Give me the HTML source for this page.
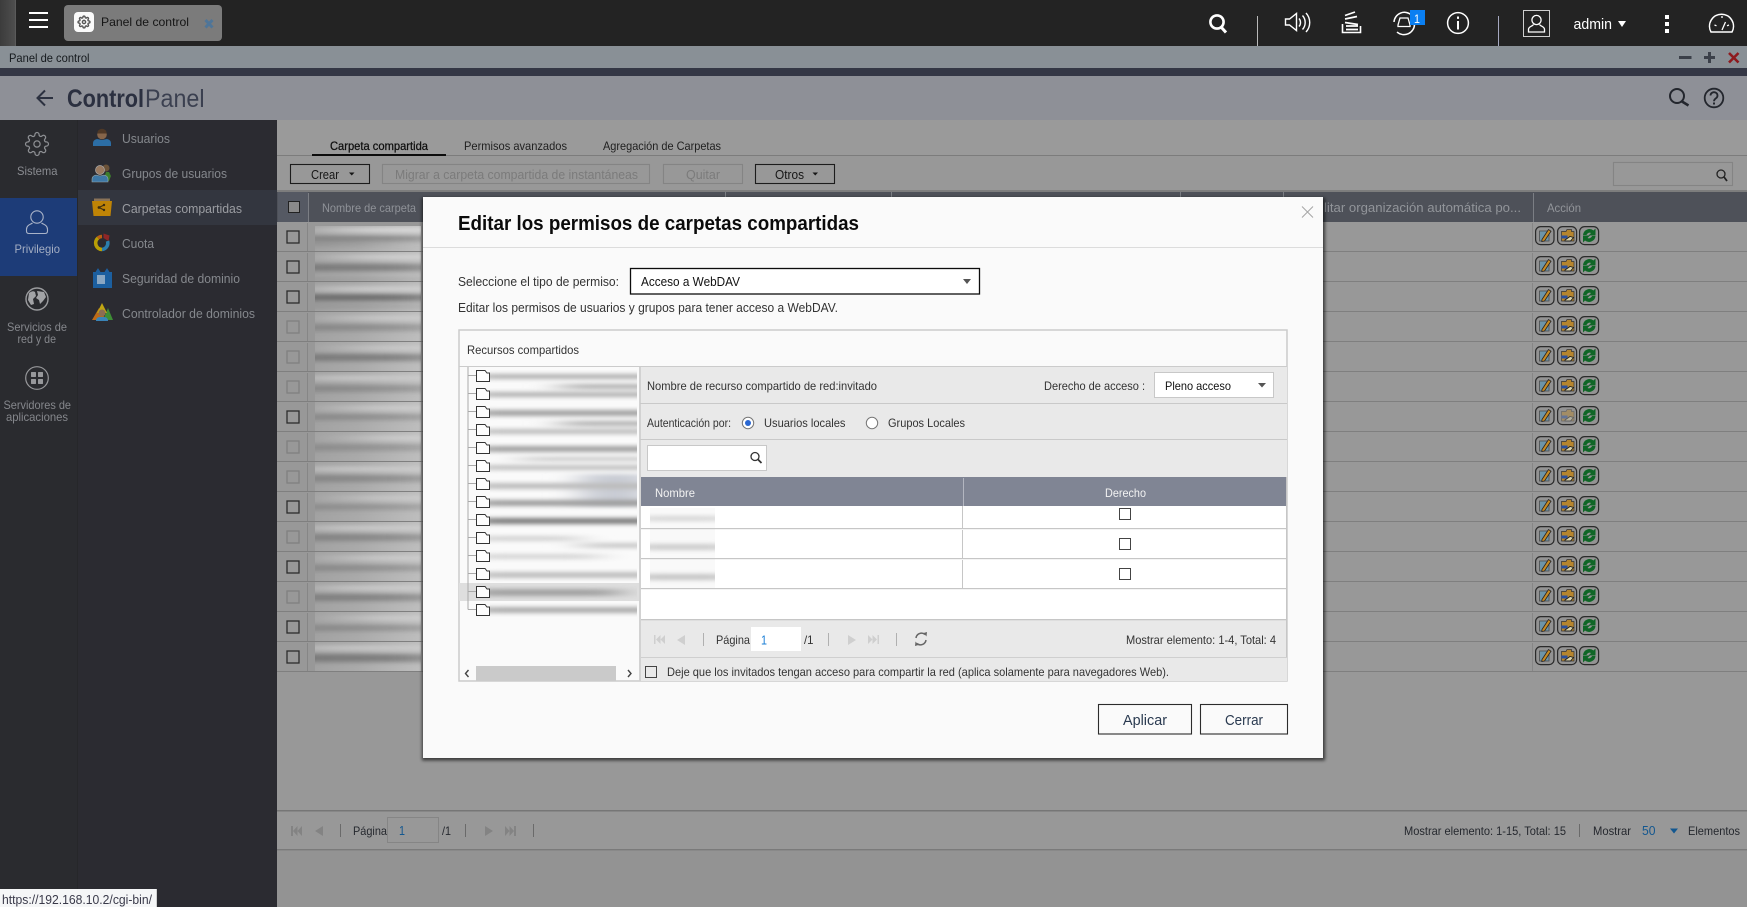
<!DOCTYPE html>
<html lang="es"><head><meta charset="utf-8"><title>Panel de control</title>
<style>
html,body{margin:0;padding:0;background:#999;width:1747px;height:907px;overflow:hidden}
svg{display:block;font-family:"Liberation Sans",Arial,sans-serif}
text{white-space:pre}
</style></head><body>
<svg xmlns="http://www.w3.org/2000/svg" width="1747" height="907" viewBox="0 0 1747 907">
<defs>
<filter id="blurH" filterUnits="userSpaceOnUse" x="200" y="180" width="1200" height="700"><feGaussianBlur stdDeviation="30 2.4"/></filter>
<filter id="blurS" filterUnits="userSpaceOnUse" x="400" y="180" width="1000" height="700"><feGaussianBlur stdDeviation="16 2"/></filter>
<filter id="sh" filterUnits="userSpaceOnUse" x="400" y="180" width="1000" height="620"><feGaussianBlur stdDeviation="1.6"/></filter>
<clipPath id="c1"><rect x="315" y="226" width="106" height="446"/></clipPath>
<clipPath id="c2"><rect x="490" y="368" width="147" height="250"/></clipPath>
<clipPath id="c3"><rect x="650" y="508" width="65" height="80"/></clipPath>
<linearGradient id="colg" x1="0" x2="1" y1="0" y2="0"><stop offset="0" stop-color="#a2a2a2"/><stop offset=".4" stop-color="#aaa"/><stop offset="1" stop-color="#bebebe"/></linearGradient>
<linearGradient id="sl" x1="0" x2="1" y1="0" y2="0"><stop offset="0" stop-color="#3c3c3c"/><stop offset="1" stop-color="#4e4e4e"/></linearGradient>
<symbol id="gear" viewBox="0 0 24 24" overflow="visible"><circle cx="12" cy="12" r="3"/><path d="M19.4 15a1.65 1.65 0 0 0 .33 1.82l.06.06a2 2 0 0 1 0 2.83 2 2 0 0 1-2.83 0l-.06-.06a1.65 1.65 0 0 0-1.82-.33 1.65 1.65 0 0 0-1 1.51V21a2 2 0 0 1-2 2 2 2 0 0 1-2-2v-.09A1.65 1.65 0 0 0 9 19.4a1.65 1.65 0 0 0-1.82.33l-.06.06a2 2 0 0 1-2.83 0 2 2 0 0 1 0-2.83l.06-.06a1.65 1.65 0 0 0 .33-1.82 1.65 1.65 0 0 0-1.51-1H3a2 2 0 0 1-2-2 2 2 0 0 1 2-2h.09A1.65 1.65 0 0 0 4.6 9a1.65 1.65 0 0 0-.33-1.82l-.06-.06a2 2 0 0 1 0-2.83 2 2 0 0 1 2.83 0l.06.06a1.65 1.65 0 0 0 1.82.33H9a1.65 1.65 0 0 0 1-1.51V3a2 2 0 0 1 2-2 2 2 0 0 1 2 2v.09a1.65 1.65 0 0 0 1 1.51 1.65 1.65 0 0 0 1.82-.33l.06-.06a2 2 0 0 1 2.83 0 2 2 0 0 1 0 2.83l-.06.06a1.65 1.65 0 0 0-.33 1.82V9a1.65 1.65 0 0 0 1.51 1H21a2 2 0 0 1 2 2 2 2 0 0 1-2 2h-.09a1.65 1.65 0 0 0-1.51 1z"/></symbol>
<g id="acts">
 <rect x=".6" y=".6" width="18.4" height="18" rx="5" fill="#939393" stroke="#2a2a2a" stroke-width="1.200"/>
 <rect x="4.500" y="5" width="9.500" height="10" fill="#6d95a8" stroke="#4c4c4c" stroke-width=".8"/>
 <path d="M7 13.500 L13.500 3.500 L16 5.200 L9.500 15 L6.800 15.500 z" fill="#c68a22" stroke="#222" stroke-width=".8"/>
 <rect x="22.600" y=".6" width="19" height="18" rx="5" fill="#939393" stroke="#2a2a2a" stroke-width="1.200"/>
 <path d="M26.500 5.500 h4.500 l1-2 h4.500 v2 h2.500 v9.500 h-12.500 z" fill="#b6852e" stroke="#333" stroke-width=".7"/>
 <rect x="26.500" y="9.500" width="6" height="3" fill="#2c4f9a"/>
 <path d="M30 14 l5-3.500 l3.500 1 l-3 3.500 h-5.500z" fill="#d9d2ab" stroke="#1c1c1c" stroke-width=".9"/>
 <rect x="44.600" y=".6" width="19" height="18" rx="5" fill="#939393" stroke="#2a2a2a" stroke-width="1.200"/>
 <path d="M48 9 a6.500 6.500 0 0 1 10.500-4.500 l2-2 v7 h-7 l2.500-2.500 a3.200 3.200 0 0 0-4.500 2z" fill="#0f6626"/>
 <path d="M60.500 10 a6.500 6.500 0 0 1-10.500 4.500 l-2 2 v-7 h7 l-2.500 2.500 a3.200 3.200 0 0 0 4.500-2z" fill="#0f6626"/>
</g>
<path id="fld" d="M.5 11.500 V.5 H9 l2 2.500 H13.500 V11.500 z" fill="#fdfdfd" stroke="#333" stroke-width="1"/>
<rect id="cd" width="12" height="12" fill="none" stroke="#2c2c2c" stroke-width="1.300"/>
<rect id="cl" width="12" height="12" fill="none" stroke="#808080" stroke-width="1.300"/>
</defs>

<!-- base content -->
<rect width="1747" height="907" fill="#989898"/>

<!-- top bar -->
<rect width="1747" height="46" fill="#232323"/>
<rect width="15" height="46" fill="url(#sl)"/><rect x="15" width="1" height="46" fill="#5a5a5a"/>
<g fill="#fff"><rect x="29" y="12" width="19" height="2"/><rect x="29" y="19" width="19" height="2"/><rect x="29" y="26" width="19" height="2"/></g>
<rect x="64" y="5" width="158" height="36" rx="4" fill="#7b7b7b"/>
<rect x="74" y="12" width="20" height="20" rx="4" fill="#fafafa"/>
<use href="#gear" x="77.500" y="15.500" width="13" height="13" fill="none" stroke="#555" stroke-width="2.600"/>
<text x="101" y="26" font-size="12" textLength="88" lengthAdjust="spacingAndGlyphs" fill="#151515">Panel de control</text>
<path d="M205.500 20 L212.500 27.500 M212.500 20 L205.500 27.500" stroke="#4f7598" stroke-width="3"/>

<!-- top-right icons -->
<g fill="none" stroke="#fff">
 <circle cx="1217" cy="22" r="6.600" stroke-width="2.600"/><path d="M1221.500 27.500 L1226 32.500" stroke-width="3"/>
 <path d="M1285.500 19 h4 l7-5.500 v17 l-7-5.500 h-4 z" stroke-width="1.400"/>
 <path d="M1299 18.500 a6 6 0 0 1 0 8 M1302.500 15.500 a10.500 10.500 0 0 1 0 14 M1306 13 a14 14 0 0 1 0 19" stroke-width="1.400"/>
 <path d="M1342.500 24 v8.500 h18 v-6.500" stroke-width="1.600"/>
 <path d="M1346 29.500 h12 M1346 26 h12 M1345 22.500 l13 2 M1345 19 l12-2.500 M1345 15.500 l10-3.500" stroke-width="1.700"/>
 <path d="M1394 22 a10.500 10.500 0 0 1 17.500-7 M1414.500 24 a10.500 10.500 0 0 1-17.500 8" stroke-width="1.500"/>
 <path d="M1398 26.500 h12 v-1.500 l-2-7 h-8 l-2 7 z" stroke-width="1.300"/>
 <circle cx="1458" cy="23" r="10.400" stroke-width="1.500"/>
 <rect x="1523.500" y="10.500" width="26" height="26" stroke="#cfcfcf" stroke-width="1"/>
 <circle cx="1536.500" cy="20" r="4.600" stroke-width="1.300"/>
 <path d="M1533.500 24.500 c-1 2-5 1.800-5 5 v2.500 h16 v-2.500 c0-3.200-4-3-5-5" stroke-width="1.300"/>
 <path d="M1711 32 a12 12 0 1 1 21 0 z" stroke-width="1.500"/>
 <path d="M1722 30 l3.500-8 M1714.500 25 l2 .8 M1722 16 v2 M1729 25 l-2 .8" stroke-width="1.300"/>
</g>
<g fill="#fff"><rect x="1457" y="21" width="2" height="8.500"/><rect x="1457" y="16.500" width="2" height="2.400"/><rect x="1665" y="15" width="4" height="4"/><rect x="1665" y="22" width="4" height="4"/><rect x="1665" y="29" width="4" height="4"/></g>
<rect x="1410" y="10" width="15" height="15" fill="#0a7ff2"/>
<text x="1414" y="23" font-size="12" textLength="6" lengthAdjust="spacingAndGlyphs" fill="#fff">1</text>
<rect x="1257" y="16" width="1" height="30" fill="#b9b9b9"/><rect x="1498" y="16" width="1" height="30" fill="#a5a8c0"/>
<text x="1573.500" y="29" font-size="15" textLength="38.500" lengthAdjust="spacingAndGlyphs" fill="#fff">admin</text>
<path d="M1618 21 h8 l-4 6 z" fill="#fff"/>

<!-- window bar -->
<rect y="46" width="1747" height="22" fill="#899096"/>
<text x="9" y="62" font-size="12" textLength="80.500" lengthAdjust="spacingAndGlyphs" fill="#15191d">Panel de control</text>
<rect x="1679" y="56" width="12.500" height="3" fill="#3b4049"/>
<path d="M1709.500 52 v11 M1704 57.500 h11" stroke="#3b4049" stroke-width="3"/>
<path d="M1729 53 L1738.500 62.500 M1738.500 53 L1729 62.500" stroke="#8e1a1e" stroke-width="2.600"/>
<rect y="68" width="1747" height="8" fill="#343745"/>

<!-- app header -->
<rect y="76" width="1747" height="44" fill="#8e9097"/>
<path d="M53 98 H38 M45 90.500 L37.500 98 L45 105.500" fill="none" stroke="#2c3140" stroke-width="2"/>
<text x="67" y="107" font-size="25" font-weight="bold" textLength="77" lengthAdjust="spacingAndGlyphs" fill="#2b3040">Control</text>
<text x="145" y="107" font-size="25" textLength="59.500" lengthAdjust="spacingAndGlyphs" fill="#3b4050">Panel</text>
<g fill="none" stroke="#23262d">
 <circle cx="1677" cy="96" r="7" stroke-width="2"/><path d="M1682 101.500 L1688.500 105.500" stroke-width="2.600"/>
 <circle cx="1714" cy="98" r="9.300" stroke-width="1.800"/>
 <path d="M1710.500 95.500 a3.500 3.300 0 1 1 5.500 2.700 c-1.500 1-2 1.600-2 3" stroke-width="1.800"/>
</g>
<rect x="1713" y="102.500" width="2" height="2" fill="#23262d"/>

<!-- sidebars -->
<rect y="120" width="78" height="787" fill="#2a2b2f"/>
<rect x="78" y="120" width="199" height="787" fill="#2b2b31"/>
<rect x="77" y="120" width="1" height="787" fill="#26272a"/>
<rect y="198" width="77" height="78" fill="#1d3c78"/>
<rect x="78" y="190" width="199" height="35" fill="#33363f"/>

<use href="#gear" x="24.500" y="131" width="25" height="26" fill="none" stroke="#8d8f93" stroke-width="1.200"/>
<text x="17" y="175" font-size="12" textLength="40.500" lengthAdjust="spacingAndGlyphs" fill="#8a8c91">Sistema</text>
<g fill="none" stroke="#a9b3c8" stroke-width="1.100">
 <circle cx="37" cy="217" r="6.200"/>
 <path d="M32.500 223 c-2 1.500-6 2-6 6.500 v1.500 c0 1.500 1 2.500 2.500 2.500 h16 c1.500 0 2.500-1 2.500-2.500 v-1.500 c0-4.500-4-5-6-6.500"/>
</g>
<text x="14.500" y="253" font-size="12" textLength="45.500" lengthAdjust="spacingAndGlyphs" fill="#a4aec3">Privilegio</text>
<circle cx="37" cy="299" r="11" fill="#2a2b2f" stroke="#9a9b9e" stroke-width="1.400"/>
<path d="M29 293 q4-3 6-1 l1 4 -3 3 1 5 -3 1 -3-5z M37 291 l7 1 2 5 -3 4 -3 3 -1-4 -3-2 2-3z" fill="#a2a3a6"/>
<text x="7" y="331" font-size="12" textLength="60" lengthAdjust="spacingAndGlyphs" fill="#85878c">Servicios de</text>
<text x="17.500" y="343" font-size="12" textLength="38.500" lengthAdjust="spacingAndGlyphs" fill="#85878c">red y de</text>
<circle cx="37" cy="378" r="11.300" fill="none" stroke="#97989b" stroke-width="1.200"/>
<g fill="#97989b"><rect x="31" y="372" width="5" height="5" rx=".6"/><rect x="38" y="372" width="5" height="5" rx=".6"/><rect x="31" y="379" width="5" height="5" rx=".6"/><rect x="38" y="379" width="5" height="5" rx=".6"/></g>
<text x="3.500" y="409" font-size="12" textLength="67.500" lengthAdjust="spacingAndGlyphs" fill="#85878c">Servidores de</text>
<text x="6" y="421" font-size="12" textLength="62" lengthAdjust="spacingAndGlyphs" fill="#85878c">aplicaciones</text>

<!-- list icons -->
<path d="M93 146 v-3 q0-3 4-4 l5 1 5-1 q4 1 4 4 v3z" fill="#2c6ea6"/><circle cx="102" cy="134.500" r="4.800" fill="#86654a"/><path d="M97.200 133.500 a4.800 4.800 0 0 1 9.600 0z" fill="#4f3826"/>
<circle cx="106" cy="168" r="3.500" fill="#6b5238"/><path d="M103 181 l3-9 h3 l2 4 -2 5z" fill="#3d7d2d"/>
<path d="M92 182 v-3 q0-3 4-4 l4 1 4-1 q4 1 4 4 v3z" fill="#3e78a6" stroke="#9aa" stroke-width=".6"/><circle cx="100" cy="170" r="4.500" fill="#9a7a60" stroke="#aaa" stroke-width=".7"/>
<rect x="94" y="198.500" width="16" height="4" fill="#8a7358"/><path d="M92 201 h20 l-1.500 15 h-17z" fill="#bf8406"/>
<path d="M99 207.500 l5-2.500 M99 207.500 l5 2.500" stroke="#3b2c10" stroke-width="1"/><circle cx="99" cy="207.500" r="1.400" fill="#3b2c10"/><circle cx="104" cy="205" r="1.200" fill="#3b2c10"/><circle cx="104" cy="210" r="1.200" fill="#3b2c10"/>
<g fill="none" stroke-width="3.600"><path d="M107.500 241 a6.500 6.500 0 0 1 -5.500 8.500" stroke="#2b7fae"/><path d="M102 249.500 a6.500 6.500 0 0 1 -4-11.500" stroke="#b99f06"/><path d="M98 238 a6.500 6.500 0 0 1 4-1.500" stroke="#bb5f12"/></g>
<path d="M103.500 233.500 l6 2 -1 5.500 -5-3z" fill="#8f2626"/>
<rect x="93" y="272" width="19" height="16" fill="#1c5f9f"/><path d="M96 272 l2-3 2 3 M105 272 l2-3 2 3" fill="#1c5f9f" stroke="#1c5f9f"/><rect x="97" y="275" width="8" height="9" fill="#8aa7c2"/>
<path d="M92 320 l7-12 7 12z" fill="#bd6a17"/><path d="M103 320 l5-12 5 12z" fill="#3e8d35"/><path d="M97 313 l5-10 5 10z" fill="#c0a613"/>
<path d="M96 321 q0-4 4-4 h4 q4 0 4 4z" fill="#3a84b8"/><circle cx="102" cy="313" r="3.500" fill="#8c6d52"/>

<g font-size="13" fill="#85888d">
<text x="122" y="143" textLength="48" lengthAdjust="spacingAndGlyphs">Usuarios</text>
<text x="122" y="178" textLength="105" lengthAdjust="spacingAndGlyphs">Grupos de usuarios</text>
<text x="122" y="213" textLength="120" lengthAdjust="spacingAndGlyphs" fill="#9b9da2">Carpetas compartidas</text>
<text x="122" y="248" textLength="32" lengthAdjust="spacingAndGlyphs">Cuota</text>
<text x="122" y="283" textLength="118" lengthAdjust="spacingAndGlyphs">Seguridad de dominio</text>
<text x="122" y="318" textLength="133" lengthAdjust="spacingAndGlyphs">Controlador de dominios</text>
</g>

<!-- content top -->
<rect x="277" y="120" width="1470" height="35" fill="#9a9a9a"/>
<rect x="277" y="155" width="1470" height="1" fill="#7c7c7c"/>
<rect x="312" y="154" width="134" height="2" fill="#0c0c0c"/>
<g font-size="12">
<text x="330" y="150" textLength="98" lengthAdjust="spacingAndGlyphs" fill="#0e0e0e" stroke="#0e0e0e" stroke-width=".25">Carpeta compartida</text>
<text x="464" y="150" textLength="103" lengthAdjust="spacingAndGlyphs" fill="#1f1f1f">Permisos avanzados</text>
<text x="603" y="150" textLength="118" lengthAdjust="spacingAndGlyphs" fill="#1f1f1f">Agregación de Carpetas</text>
</g>
<g fill="none" stroke="#1c1c1c" stroke-width="1.100"><rect x="290.500" y="164.500" width="79" height="19"/><rect x="755.500" y="164.500" width="79" height="19"/></g>
<g fill="none" stroke="#848484" stroke-width="1.100"><rect x="382.500" y="164.500" width="267" height="19"/><rect x="663.500" y="164.500" width="79" height="19"/><rect x="1613.500" y="162.500" width="119" height="23"/></g>
<g font-size="12.500">
<text x="311" y="179" textLength="28" lengthAdjust="spacingAndGlyphs" fill="#161616">Crear</text>
<text x="395" y="179" textLength="243" lengthAdjust="spacingAndGlyphs" fill="#7b7b7b">Migrar a carpeta compartida de instantáneas</text>
<text x="686" y="179" textLength="34" lengthAdjust="spacingAndGlyphs" fill="#7b7b7b">Quitar</text>
<text x="775" y="179" textLength="29" lengthAdjust="spacingAndGlyphs" fill="#161616">Otros</text>
</g>
<path d="M349 172.500 h5.500 l-2.750 3z M812.500 172.500 h5.500 l-2.750 3z" fill="#161616"/>
<circle cx="1721" cy="174" r="4" fill="none" stroke="#222" stroke-width="1.300"/><path d="M1724 177 L1727 181" stroke="#222" stroke-width="1.800"/>

<!-- table header -->
<rect x="277" y="190" width="1470" height="2" fill="#7d7d7d"/>
<rect x="277" y="192" width="1470" height="30" fill="#4e5159"/>
<rect x="278" y="192" width="30" height="30" fill="#555963"/>
<rect x="308" y="193" width="1" height="29" fill="#7b7e84"/>
<rect x="1533" y="193" width="1" height="29" fill="#7b7e84"/>
<g fill="#7b7e84"><rect x="725" y="192" width="1" height="5"/><rect x="891" y="192" width="1" height="5"/><rect x="1180" y="192" width="1" height="5"/><rect x="1283" y="192" width="1" height="5"/></g>
<rect x="288.500" y="201.500" width="11" height="11" fill="#8a8a8a" stroke="#222" stroke-width="1"/>
<text x="322" y="212" font-size="12" textLength="94" lengthAdjust="spacingAndGlyphs" fill="#8f9298">Nombre de carpeta</text>
<text x="1324" y="212" font-size="13" textLength="197" lengthAdjust="spacingAndGlyphs" fill="#92959a">litar organización automática po...</text>
<text x="1547" y="212" font-size="12" textLength="34" lengthAdjust="spacingAndGlyphs" fill="#92959a">Acción</text>

<!-- table rows: blurred column -->
<g clip-path="url(#c1)">
<rect x="315" y="226" width="106" height="446" fill="url(#colg)"/>
<g filter="url(#blurH)" fill="#666">
<rect x="330" y="228" width="150" height="4" fill="#e2e2e2"/><rect x="260" y="236" width="180" height="5" opacity=".6"/>
<rect x="260" y="243" width="120" height="3" opacity=".35"/>
<rect x="260" y="264" width="180" height="7" opacity=".7"/><rect x="340" y="255" width="140" height="4" fill="#d8d8d8"/>
<rect x="260" y="278" width="180" height="3" opacity=".25"/>
<rect x="260" y="294" width="180" height="7" opacity=".9"/><rect x="320" y="287" width="160" height="4" fill="#d5d5d5"/>
<rect x="260" y="305" width="180" height="3" opacity=".35"/>
<rect x="260" y="324" width="180" height="7" opacity=".45"/><rect x="340" y="316" width="140" height="4" fill="#d0d0d0"/>
<rect x="260" y="354" width="180" height="7" opacity=".7"/><rect x="350" y="346" width="130" height="4" fill="#cfcfcf"/>
<rect x="260" y="385" width="180" height="7" opacity=".45"/><rect x="300" y="376" width="180" height="4" fill="#cfcfcf"/>
<rect x="260" y="414" width="180" height="6" opacity=".45"/><rect x="340" y="406" width="140" height="4" fill="#d2d2d2"/>
<rect x="260" y="444" width="180" height="7" opacity=".4"/><rect x="360" y="436" width="120" height="4" fill="#d4d4d4"/>
<rect x="260" y="475" width="180" height="7" opacity=".5"/><rect x="300" y="467" width="180" height="4" fill="#d0d0d0"/>
<rect x="260" y="504" width="180" height="6" opacity=".4"/><rect x="350" y="496" width="130" height="4" fill="#cecece"/>
<rect x="260" y="534" width="180" height="7" opacity=".55"/><rect x="310" y="526" width="170" height="4" fill="#d2d2d2"/>
<rect x="260" y="565" width="180" height="6" opacity=".45"/><rect x="340" y="556" width="140" height="4" fill="#d2d2d2"/>
<rect x="260" y="594" width="180" height="7" opacity=".6"/><rect x="320" y="586" width="160" height="4" fill="#d2d2d2"/>
<rect x="260" y="625" width="180" height="6" opacity=".45"/><rect x="350" y="616" width="130" height="4" fill="#d2d2d2"/>
<rect x="260" y="654" width="180" height="8" opacity=".7"/><rect x="300" y="646" width="180" height="4" fill="#cfcfcf"/>
</g></g>

<!-- row lines -->
<g fill="#7f7f7f">
<rect x="277" y="251" width="1470" height="1"/><rect x="277" y="281" width="1470" height="1"/><rect x="277" y="311" width="1470" height="1"/><rect x="277" y="341" width="1470" height="1"/><rect x="277" y="371" width="1470" height="1"/><rect x="277" y="401" width="1470" height="1"/><rect x="277" y="431" width="1470" height="1"/><rect x="277" y="461" width="1470" height="1"/><rect x="277" y="491" width="1470" height="1"/><rect x="277" y="521" width="1470" height="1"/><rect x="277" y="551" width="1470" height="1"/><rect x="277" y="581" width="1470" height="1"/><rect x="277" y="611" width="1470" height="1"/><rect x="277" y="641" width="1470" height="1"/><rect x="277" y="671" width="1470" height="1"/>
</g>
<path d="M307.500 223 V671" stroke="#868686" stroke-width="1" stroke-dasharray="28 2"/>
<path d="M1532.500 223 V671" stroke="#868686" stroke-width="1" stroke-dasharray="28 2"/>

<!-- checkboxes -->
<use href="#cd" x="287" y="231"/><use href="#cd" x="287" y="261"/><use href="#cd" x="287" y="291"/>
<use href="#cl" x="287" y="321"/><use href="#cl" x="287" y="351"/><use href="#cl" x="287" y="381"/>
<use href="#cd" x="287" y="411"/><use href="#cl" x="287" y="441"/><use href="#cl" x="287" y="471"/>
<use href="#cd" x="287" y="501"/><use href="#cl" x="287" y="531"/><use href="#cd" x="287" y="561"/>
<use href="#cl" x="287" y="591"/><use href="#cd" x="287" y="621"/><use href="#cd" x="287" y="651"/>

<!-- action icons -->
<use href="#acts" x="1535" y="226"/><use href="#acts" x="1535" y="256"/><use href="#acts" x="1535" y="286"/>
<use href="#acts" x="1535" y="316"/><use href="#acts" x="1535" y="346"/><use href="#acts" x="1535" y="376"/>
<use href="#acts" x="1535" y="406"/><use href="#acts" x="1535" y="436"/><use href="#acts" x="1535" y="466"/>
<use href="#acts" x="1535" y="496"/><use href="#acts" x="1535" y="526"/><use href="#acts" x="1535" y="556"/>
<use href="#acts" x="1535" y="586"/><use href="#acts" x="1535" y="616"/><use href="#acts" x="1535" y="646"/>
<rect x="1559" y="408" width="16" height="15" fill="#939393" opacity=".55"/>

<!-- main pager -->
<rect x="277" y="810" width="1470" height="1.500" fill="#767676"/>
<rect x="277" y="849" width="1470" height="1.500" fill="#7a7a7a"/>
<rect x="277" y="851" width="1470" height="56" fill="#939393"/>
<g fill="#838383">
<rect x="291" y="826" width="2" height="10"/><path d="M302 826 v10 l-4.500-5z M297.500 826 v10 l-4.500-5z"/>
<path d="M323 826 v10 l-8-5z"/><path d="M485 826 v10 l8-5z"/>
<path d="M505 826 v10 l4.500-5z M509.500 826 v10 l4.500-5z"/><rect x="514" y="826" width="2" height="10"/>
</g>
<g fill="#6a6a6a"><rect x="340" y="824" width="1" height="13"/><rect x="465" y="824" width="1" height="13"/><rect x="533" y="824" width="1" height="13"/><rect x="1579" y="824" width="1" height="13"/></g>
<rect x="387.500" y="817.500" width="51" height="25" fill="none" stroke="#858585"/>
<g font-size="12" fill="#25282e">
<text x="353" y="835" textLength="34" lengthAdjust="spacingAndGlyphs">Página</text>
<text x="442" y="835" textLength="9" lengthAdjust="spacingAndGlyphs">/1</text>
<text x="1404" y="835" textLength="162" lengthAdjust="spacingAndGlyphs">Mostrar elemento: 1-15, Total: 15</text>
<text x="1593" y="835" textLength="38" lengthAdjust="spacingAndGlyphs">Mostrar</text>
<text x="1688" y="835" textLength="52" lengthAdjust="spacingAndGlyphs">Elementos</text>
</g>
<text x="399" y="835" font-size="13" textLength="6" lengthAdjust="spacingAndGlyphs" fill="#13578f">1</text>
<text x="1642" y="835" font-size="13" textLength="13.500" lengthAdjust="spacingAndGlyphs" fill="#13578f">50</text>
<path d="M1670 828.500 h8 l-4 5z" fill="#13578f"/>

<!-- status tooltip -->
<rect x="0" y="889" width="157" height="18" fill="#f5f6f7"/>
<rect x="156" y="889" width="1" height="18" fill="#d0d0d0"/>
<text x="2" y="904" font-size="13" textLength="150" lengthAdjust="spacingAndGlyphs" fill="#3a3a4a">https://192.168.10.2/cgi-bin/</text>

<!-- modal -->
<rect x="422" y="198" width="903" height="562.500" fill="#000" opacity=".62" filter="url(#sh)"/>
<rect x="423" y="197" width="900" height="561" fill="#fafafa"/>
<rect x="423" y="247" width="900" height="1" fill="#dcdcdc"/>
<text x="458" y="230" font-size="20.500" font-weight="bold" textLength="401" lengthAdjust="spacingAndGlyphs" fill="#0b0b0b">Editar los permisos de carpetas compartidas</text>
<path d="M1302 206.500 L1313 217.500 M1313 206.500 L1302 217.500" stroke="#a5a5a5" stroke-width="1"/>
<text x="458" y="286" font-size="13" textLength="161" lengthAdjust="spacingAndGlyphs" fill="#333">Seleccione el tipo de permiso:</text>
<rect x="630.500" y="268.500" width="349" height="25.500" fill="#fff" stroke="#0d0d0d" stroke-width="1.300"/>
<text x="641" y="286" font-size="13" textLength="99" lengthAdjust="spacingAndGlyphs" fill="#111">Acceso a WebDAV</text>
<path d="M963 279 h8 l-4 5z" fill="#555"/>
<text x="458" y="312" font-size="13" textLength="380" lengthAdjust="spacingAndGlyphs" fill="#333">Editar los permisos de usuarios y grupos para tener acceso a WebDAV.</text>

<!-- panel -->
<rect x="459" y="330" width="828" height="351" fill="#fafafa" stroke="#cbcbcb" stroke-width="1.500"/>
<rect x="459" y="366" width="828" height="1" fill="#cbcbcb"/>
<text x="467" y="354" font-size="12" textLength="112" lengthAdjust="spacingAndGlyphs" fill="#333">Recursos compartidos</text>

<!-- tree -->
<rect x="459" y="583" width="181" height="18" fill="#dedede"/>
<g clip-path="url(#c2)">
<rect x="580" y="474" width="70" height="32" fill="#c9ccd4" filter="url(#blurS)"/>
<g filter="url(#blurS)" fill="#b0b0b0">
<rect x="470" y="374" width="200" height="5"/><rect x="560" y="384" width="110" height="5"/>
<rect x="470" y="392" width="200" height="5"/>
<rect x="470" y="410" width="200" height="6" fill="#a0a0a0"/><rect x="560" y="421" width="110" height="5"/>
<rect x="470" y="429" width="200" height="5" fill="#bcbcbc"/>
<rect x="470" y="446" width="200" height="6" fill="#a0a0a0"/><rect x="520" y="457" width="150" height="4" fill="#c8c8c8"/>
<rect x="470" y="465" width="200" height="5" fill="#c0c0c0"/>
<rect x="470" y="483" width="200" height="6" fill="#bcbcbc"/>
<rect x="470" y="500" width="200" height="6" fill="#9c9c9c"/>
<rect x="470" y="518" width="200" height="6" fill="#7c7c7c"/>
<rect x="470" y="536" width="110" height="5" fill="#d2d2d2"/><rect x="580" y="543" width="90" height="5" fill="#c8c8c8"/>
<rect x="470" y="554" width="130" height="5" fill="#d4d4d4"/>
<rect x="470" y="572" width="200" height="6" fill="#bebebe"/>
<rect x="470" y="589" width="150" height="7" fill="#a2a2a2"/>
<rect x="470" y="607" width="200" height="6" fill="#acacac"/>
</g></g>
<path d="M468 367 V609.500" stroke="#aaa" stroke-width="1"/>
<g stroke="#aaa" stroke-width="1"><path d="M468 375.500 h8 M468 393.500 h8 M468 411.500 h8 M468 429.500 h8 M468 447.500 h8 M468 465.500 h8 M468 483.500 h8 M468 501.500 h8 M468 519.500 h8 M468 537.500 h8 M468 555.500 h8 M468 573.500 h8 M468 591.500 h8 M468 609.500 h8"/></g>
<use href="#fld" x="476" y="370"/><use href="#fld" x="476" y="388"/><use href="#fld" x="476" y="406"/><use href="#fld" x="476" y="424"/><use href="#fld" x="476" y="442"/><use href="#fld" x="476" y="460"/><use href="#fld" x="476" y="478"/><use href="#fld" x="476" y="496"/><use href="#fld" x="476" y="514"/><use href="#fld" x="476" y="532"/><use href="#fld" x="476" y="550"/><use href="#fld" x="476" y="568"/><use href="#fld" x="476" y="586"/><use href="#fld" x="476" y="604"/>

<!-- tree scroll -->
<rect x="476" y="666" width="140" height="15" fill="#cacaca"/>
<path d="M468.500 670 l-3 3.500 3 3.500 M628 670 l3 3.500 -3 3.500" fill="none" stroke="#444" stroke-width="1.400"/>

<!-- right pane -->
<rect x="640" y="367" width="647" height="110" fill="#e9e9e9"/>
<rect x="639" y="367" width="2" height="314" fill="#d2d2d2"/>
<rect x="640" y="403" width="647" height="1" fill="#c9c9c9"/>
<rect x="640" y="439" width="647" height="1" fill="#c9c9c9"/>
<g font-size="12" fill="#333">
<text x="647" y="390" textLength="230" lengthAdjust="spacingAndGlyphs">Nombre de recurso compartido de red:invitado</text>
<text x="1044" y="390" textLength="101" lengthAdjust="spacingAndGlyphs">Derecho de acceso :</text>
<text x="647" y="427" textLength="84" lengthAdjust="spacingAndGlyphs">Autenticación por:</text>
<text x="764" y="427" textLength="81.500" lengthAdjust="spacingAndGlyphs">Usuarios locales</text>
<text x="888" y="427" textLength="77" lengthAdjust="spacingAndGlyphs">Grupos Locales</text>
</g>
<rect x="1154.500" y="372.500" width="119" height="25" fill="#fff" stroke="#c8c8c8"/>
<text x="1165" y="390" font-size="12" textLength="66" lengthAdjust="spacingAndGlyphs" fill="#111">Pleno acceso</text>
<path d="M1258 383 h8 l-4 4.500z" fill="#555"/>
<circle cx="748" cy="423" r="5.700" fill="#fff" stroke="#777"/><circle cx="748" cy="423" r="3" fill="#2a67d2"/>
<circle cx="872" cy="423" r="5.700" fill="#fff" stroke="#777"/>
<rect x="647.500" y="445.500" width="119" height="25" fill="#fff" stroke="#c8c8c8"/>
<circle cx="755" cy="456.500" r="4" fill="none" stroke="#333" stroke-width="1.300"/><path d="M758 459.500 L761.500 463" stroke="#333" stroke-width="1.800"/>

<!-- grid -->
<rect x="641" y="477" width="645" height="29" fill="#808594"/>
<rect x="963" y="478" width="1" height="28" fill="#b3b6c0"/>
<text x="655" y="497" font-size="12" textLength="40" lengthAdjust="spacingAndGlyphs" fill="#f2f2f2">Nombre</text>
<text x="1105" y="497" font-size="12" textLength="41" lengthAdjust="spacingAndGlyphs" fill="#f2f2f2">Derecho</text>
<rect x="641" y="506" width="645" height="113" fill="#fff"/>
<g clip-path="url(#c3)"><rect x="650" y="508" width="65" height="80" fill="#f9f9f9"/>
<g filter="url(#blurS)" fill="#d6d6d6"><rect x="630" y="516" width="105" height="5"/><rect x="630" y="544" width="105" height="6" fill="#ccc"/><rect x="630" y="574" width="105" height="6" fill="#c4c4c4"/></g></g>
<g fill="#c6c6c6"><rect x="641" y="528" width="645" height="1.200"/><rect x="641" y="558" width="645" height="1.200"/><rect x="641" y="588" width="645" height="1.200"/><rect x="962" y="506" width="1" height="22"/><rect x="962" y="530" width="1" height="28"/><rect x="962" y="560" width="1" height="28"/></g>
<g fill="none" stroke="#444" stroke-width="1"><rect x="1119.500" y="508.500" width="11" height="11"/><rect x="1119.500" y="538.500" width="11" height="11"/><rect x="1119.500" y="568.500" width="11" height="11"/></g>

<!-- grid pager -->
<rect x="641" y="619" width="646" height="62" fill="#e9e9e9"/>
<rect x="641" y="619" width="646" height="1.300" fill="#c6c6c6"/>
<rect x="641" y="657" width="646" height="1" fill="#cfcfcf"/>
<rect x="1286" y="477" width="1" height="180" fill="#c6c6c6"/>
<g fill="#cfcfcf">
<rect x="654" y="635" width="1.500" height="9"/><path d="M665 635 v9 l-4.500-4.500z M660.500 635 v9 l-4.500-4.500z"/>
<path d="M685 635 v10 l-8-5z"/><path d="M848 635 v10 l8-5z"/>
<path d="M868 635 v9 l4.500-4.500z M872.500 635 v9 l4.500-4.500z"/><rect x="877.500" y="635" width="1.500" height="9"/>
</g>
<g fill="#b0b0b0"><rect x="703" y="633" width="1" height="13"/><rect x="828" y="633" width="1" height="13"/><rect x="896" y="633" width="1" height="13"/></g>
<rect x="751" y="627" width="50" height="24" fill="#fff"/>
<g font-size="12" fill="#333">
<text x="716" y="644" textLength="34" lengthAdjust="spacingAndGlyphs">Página</text>
<text x="804" y="644" textLength="9.500" lengthAdjust="spacingAndGlyphs">/1</text>
<text x="1126" y="644" textLength="150" lengthAdjust="spacingAndGlyphs">Mostrar elemento: 1-4, Total: 4</text>
<text x="667" y="676" textLength="502" lengthAdjust="spacingAndGlyphs">Deje que los invitados tengan acceso para compartir la red (aplica solamente para navegadores Web).</text>
</g>
<text x="761" y="644.500" font-size="13" textLength="6" lengthAdjust="spacingAndGlyphs" fill="#1b7fd6">1</text>
<g fill="none" stroke="#666" stroke-width="1.500"><path d="M916 638 a5.500 5.500 0 0 1 9-3.500"/><path d="M926 640 a5.500 5.500 0 0 1-9 3.500"/></g>
<path d="M923.500 633 l3.500-1 -.5 4.500z M918.500 645 l-3.500 1 .5-4.500z" fill="#666"/>
<rect x="645.500" y="666.500" width="11" height="11" fill="none" stroke="#444"/>

<!-- buttons -->
<g fill="#fafafa" stroke="#2c2c2c" stroke-width="1.100"><rect x="1098.500" y="704.500" width="93" height="29.500"/><rect x="1200.500" y="704.500" width="87" height="29.500"/></g>
<text x="1123" y="725" font-size="15" textLength="44" lengthAdjust="spacingAndGlyphs" fill="#2a3a50">Aplicar</text>
<text x="1225" y="725" font-size="15" textLength="38" lengthAdjust="spacingAndGlyphs" fill="#2a3a50">Cerrar</text>
</svg>
</body></html>
